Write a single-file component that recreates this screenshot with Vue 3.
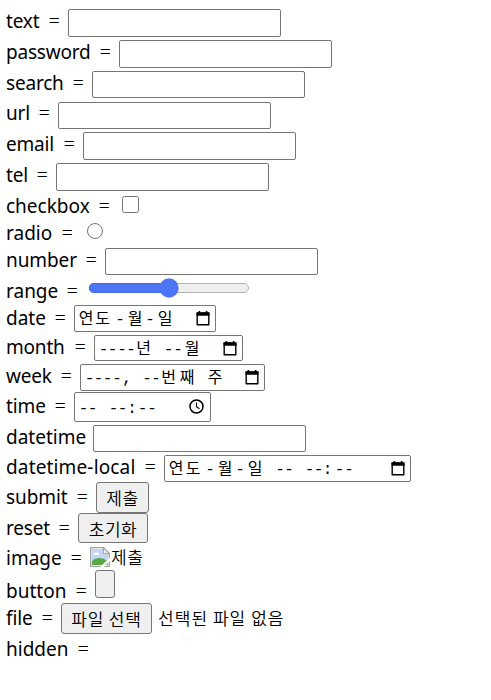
<script setup>
const rows = [
  { name: 'text', kind: 'input' },
  { name: 'password', kind: 'input' },
  { name: 'search', kind: 'input' },
  { name: 'url', kind: 'input' },
  { name: 'email', kind: 'input' },
  { name: 'tel', kind: 'input' },
  { name: 'checkbox', kind: 'checkbox' },
  { name: 'radio', kind: 'radio' },
  { name: 'number', kind: 'input' },
  { name: 'range', kind: 'range' },
  { name: 'date', kind: 'picker', w: 142, h: 27, icon: 121, chars: '연도-월-일', xs: [12, 28.5, 46, 61, 76, 91] },
  { name: 'month', kind: 'picker', w: 149, h: 26, icon: 128, chars: '----년--월', xs: [9.5, 18.5, 28, 37, 49.5, 74.5, 84, 98] },
  { name: 'week', kind: 'picker', w: 185, h: 27, icon: 164, chars: '----,--번째주', xs: [9.5, 18.5, 27.5, 37, 47, 67, 76, 88.5, 107, 135] },
  { name: 'time', kind: 'picker', w: 137, h: 30, clock: 122.5, chars: '----:--', xs: [9.5, 18.5, 39.5, 48.5, 58, 68.5, 78] },
  { name: 'datetime', kind: 'input', bare: true },
  { name: 'datetime-local', kind: 'picker', w: 247, h: 27, icon: 226, chars: '연도-월-일----:--', xs: [12, 29, 46, 61, 76, 91, 116, 125, 145.5, 154.5, 163.5, 175.5, 185] },
  { name: 'submit', kind: 'button', text: '제출' },
  { name: 'reset', kind: 'button', text: '초기화' },
  { name: 'image', kind: 'image' },
  { name: 'button', kind: 'button', text: '' },
  { name: 'file', kind: 'file' },
  { name: 'hidden', kind: 'none' }
]
</script>

<template>
  <main class="form">
    <div v-for="r in rows" :key="r.name" class="row" :class="'row-' + r.name">
      <label class="label"><span class="name">{{ r.name }}</span><span v-if="!r.bare" class="eq">=</span></label>
      <input v-if="r.kind === 'input'" class="control field" :type="r.name === 'password' ? 'password' : 'text'" />
      <input v-else-if="r.kind === 'checkbox'" type="checkbox" class="control check" />
      <input v-else-if="r.kind === 'radio'" type="radio" class="control radio" />
      <div v-else-if="r.kind === 'range'" class="control range">
        <svg width="160" height="20" viewBox="0 0 160 20">
          <rect x=".5" y="5.5" width="159" height="9" rx="4.5" fill="#efefef" stroke="#b2b2b2" />
          <path d="M80 5H5a5 5 0 0 0 0 10h75z" fill="#4d76f6" />
          <path d="M80 5.5H5a4.5 4.5 0 0 0 0 9h75" fill="none" stroke="#4169d8" stroke-width=".8" />
          <circle cx="80" cy="10" r="9.7" fill="#4d76f6" />
        </svg>
      </div>
      <div v-else-if="r.kind === 'picker'" class="control picker">
        <svg :width="r.w" :height="r.h">
          <rect x=".5" y=".5" :width="r.w - 1" :height="r.h - 1" rx="1.5" fill="#fff" stroke="#767676" />
          <text class="chars" :x="r.xs.join(' ')" :y="r.h / 2 + 5.5">{{ r.chars }}</text>
          <g v-if="r.icon" :transform="`translate(${r.icon} 5)`">
            <path d="M2.2 3h11.6v11.8H2.2z" fill="none" stroke="#000" stroke-width="1.4" stroke-linejoin="round" />
            <path d="M1.5 2.4h13v3.4h-13zM3.6 1h1.6v2H3.6zM10.8 1h1.6v2h-1.6z" />
          </g>
          <g v-else fill="none" stroke="#000">
            <circle :cx="r.clock" cy="14.5" r="6.5" stroke-width="1.5" />
            <path :d="`M${r.clock} 10.5v4.3l3 2`" stroke-width="1.1" />
          </g>
        </svg>
      </div>
      <button v-else-if="r.kind === 'button'" class="control btn">{{ r.text }}</button>
      <div v-else-if="r.kind === 'image'" class="control image">
        <svg width="20" height="20" viewBox="0 0 20 20">
          <path d="M.7.7h12.8l5.8 5.8v12.8H.7z" fill="#fff" stroke="#a3a3a3" stroke-width="1.3" />
          <path d="M2 2h11.3v5.2H18V18H2z" fill="#c3d5f5" />
          <path d="M3.5 7.7a1.8 1.8 0 0 1 2.3-2 2.2 2.2 0 0 1 3.3 1.2 1 1 0 0 1-.2 1.2H3.5z" fill="#fff" />
          <path d="M2 18v-3.5c2-2.6 4.5-3.5 7.5-3.5s6 1.2 8.5 3.5V18z" fill="#5aa844" />
          <path d="M13.3.7v6h6z" fill="#eee" stroke="#999" />
          <path d="M10 20l10-9.5V14l-6 6z" fill="#fff" />
        </svg>
        <span class="alt">제출</span>
      </div>
      <div v-else-if="r.kind === 'file'" class="control file">
        <button class="btn">파일 선택</button><span class="status">선택된 파일 없음</span>
      </div>
    </div>
  </main>
</template>

<style>
body { margin: 0; background: #fff; }
</style>

<style scoped>
.form { box-sizing: border-box; height: 700px; padding: 6px 0 0 6px; overflow: hidden; color: #000; font-family: "Noto Sans", "Noto Sans CJK KR", sans-serif; }
.row { display: flex; align-items: flex-start; height: var(--h, 31px); }
.label { display: flex; flex: none; box-sizing: border-box; justify-content: space-between; width: var(--w); padding-right: var(--gap, 8px); font-size: 19px; line-height: 30px; white-space: nowrap; }
.name { letter-spacing: var(--ls, 0); }
.eq { font-size: 20px; font-weight: 300; }
.control { flex: none; margin: var(--top, 3px) 0 0; }
.field { box-sizing: border-box; width: 213px; height: var(--fh, 28px); padding: 1px 2px; border: 1px solid #767676; border-radius: 2px; background: #fff; outline: none; }
.check { width: 17px; height: 17px; }
.radio { width: 16px; height: 16px; }
.range, .picker { display: flex; }
.chars { font: 400 16px "Liberation Mono", "Noto Sans CJK KR", monospace; text-anchor: middle; }
.btn { box-sizing: border-box; width: var(--bw); height: var(--bh, 31px); padding: 0; border: 1px solid #767676; border-radius: 3px; background: #efefef; color: #000; font: 350 17px/27px "Noto Sans CJK KR", sans-serif; letter-spacing: .5px; white-space: nowrap; }
.image, .file { display: flex; font: 350 17px/20px "Noto Sans CJK KR", sans-serif; white-space: nowrap; }
.alt { margin-left: 1px; letter-spacing: .6px; }
.file { line-height: 30px; }
.status { margin-left: 6px; letter-spacing: 1.05px; }
.row-text { --w: 62px; --ls: -.2px; }
.row-password { --w: 113px; --ls: -.2px; }
.row-search { --w: 86px; --h: 30px; --ls: -.2px; --fh: 27px; }
.row-url { --w: 52px; --top: 4px; --ls: -.2px; --fh: 27px; }
.row-email { --w: 77px; --ls: -.2px; }
.row-tel { --w: 50px; --ls: -.2px; }
.row-checkbox { --w: 116px; --h: 27px; --top: 5px; --gap: 12px; }
.row-radio { --w: 81px; --h: 27px; --top: 5px; --gap: 14px; }
.row-number { --w: 99px; --ls: -.1px; --fh: 27px; }
.row-range { --w: 83px; --h: 27px; --top: 2px; --gap: 11px; }
.row-date { --w: 68px; --h: 29px; --top: 2px; }
.row-month { --w: 88px; --h: 29px; --ls: -.2px; }
.row-week { --w: 74px; --h: 30px; --ls: -.2px; }
.row-time { --w: 68px; --top: 1px; --ls: -.1px; }
.row-datetime { --w: 87px; --h: 30px; --fh: 27px; }
.row-datetime-local { --w: 158px; --h: 30px; --ls: .15px; }
.row-submit { --w: 90px; --top: 0px; --bw: 53px; --ls: -.1px; }
.row-reset { --w: 72px; --h: 30px; --top: 0px; --bw: 70px; --bh: 30px; --ls: -.2px; }
.row-image { --w: 84px; --h: 33px; --top: 4px; }
.row-button { --w: 89px; --h: 27px; --top: -6px; --bw: 20px; --bh: 28px; }
.row-file { --w: 55px; --top: 0px; --bw: 91px; --ls: -.1px; }
.row-file .btn { letter-spacing: .8px; }
.row-hidden { --w: 91px; }
</style>
